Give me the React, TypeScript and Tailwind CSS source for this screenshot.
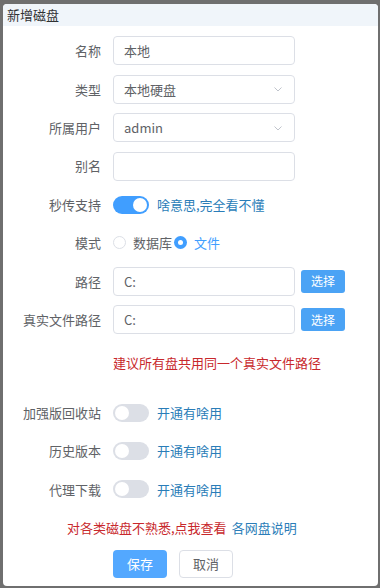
import React from 'react';

const font = { fontFamily: '"Noto Sans CJK SC", "Noto Sans", sans-serif' };

const Label: React.FC<{ text: string }> = ({ text }) => (
  <div className="w-[110px] shrink-0 pr-[12px] text-right text-[13px] text-[#606266]">{text}</div>
);

const Chevron = () => (
  <svg width="12" height="12" viewBox="0 0 12 12" className="text-[#c0c4cc]">
    <path d="M2.5 4.5 L6 8 L9.5 4.5" fill="none" stroke="currentColor" strokeWidth="1" />
  </svg>
);

const Input: React.FC<{ value?: string; select?: boolean }> = ({ value, select }) => (
  <div className="flex h-[29px] w-[182px] items-center justify-between rounded-[4px] border border-[#dcdfe6] bg-white pl-[10px] pr-[10px] text-[13px] text-[#606266]">
    <span>{value}</span>
    {select && <Chevron />}
  </div>
);

const Toggle: React.FC<{ on?: boolean }> = ({ on }) => (
  <div
    className={
      on
        ? 'flex h-[18px] w-[36px] items-center justify-end rounded-full bg-[#409eff] px-[2px]'
        : 'flex h-[18px] w-[36px] items-center justify-start rounded-full bg-[#dcdfe6] px-[2px]'
    }
  >
    <div className="h-[14px] w-[14px] rounded-full bg-white" />
  </div>
);

const Row: React.FC<{ label?: string; children?: React.ReactNode; className?: string }> = ({
  label,
  children,
  className,
}) => (
  <div className={'flex h-[38.4px] items-center ' + (className ?? '')}>
    <Label text={label ?? ''} />
    {children}
  </div>
);

const PickButton = () => (
  <div className="ml-[6px] flex h-[23px] w-[44px] items-center justify-center rounded-[3px] bg-[#4ba3f5] text-[12px] text-white">
    选择
  </div>
);

export default function App() {
  return (
    <div className="h-[588px] w-[380px] overflow-hidden bg-[#6f6f6f] pt-[4px] pl-[3px] pr-[2px]" style={font}>
      <div className="h-[582px] overflow-hidden rounded-[4px] bg-white">
        <div className="flex h-[22px] items-center bg-[#f0f5fa] pl-[4px] text-[13px] text-[#303133]">新增磁盘</div>
        <div className="pt-[5.8px]">
          <Row label="名称">
            <Input value="本地" />
          </Row>
          <Row label="类型">
            <Input value="本地硬盘" select />
          </Row>
          <Row label="所属用户">
            <Input value="admin" select />
          </Row>
          <Row label="别名">
            <Input />
          </Row>
          <Row label="秒传支持">
            <Toggle on />
            <span className="ml-[8px] text-[13px] text-[#2a7db8]">啥意思,完全看不懂</span>
          </Row>
          <Row label="模式">
            <div className="flex items-center text-[13px]">
              <div className="h-[13px] w-[13px] rounded-full border border-[#dcdfe6] bg-white" />
              <span className="ml-[7px] text-[#606266]">数据库</span>
              <div className="ml-[2px] flex h-[13px] w-[13px] items-center justify-center rounded-full bg-[#409eff]">
                <div className="h-[5px] w-[5px] rounded-full bg-white" />
              </div>
              <span className="ml-[7px] text-[#409eff]">文件</span>
            </div>
          </Row>
          <Row label="路径">
            <Input value="C:" />
            <PickButton />
          </Row>
          <Row label="真实文件路径">
            <Input value="C:" />
            <PickButton />
          </Row>
          <Row className="mt-[4.6px]">
            <span className="text-[13px] text-[#c8282c]">建议所有盘共用同一个真实文件路径</span>
          </Row>
          <Row label="加强版回收站" className="mt-[11.6px]">
            <Toggle />
            <span className="ml-[8px] text-[13px] text-[#2a7db8]">开通有啥用</span>
          </Row>
          <Row label="历史版本">
            <Toggle />
            <span className="ml-[8px] text-[13px] text-[#2a7db8]">开通有啥用</span>
          </Row>
          <Row label="代理下载">
            <Toggle />
            <span className="ml-[8px] text-[13px] text-[#2a7db8]">开通有啥用</span>
          </Row>
          <div className="flex h-[38.4px] items-center pl-[64px] text-[13px]">
            <span className="text-[#c8282c]">对各类磁盘不熟悉,点我查看</span>
            <span className="ml-[5px] text-[#2a7db8]">各网盘说明</span>
          </div>
          <div className="flex h-[34px] items-center pl-[110px]">
            <div className="flex h-[28px] w-[54px] items-center justify-center rounded-[4px] bg-[#53a8ff] text-[13px] text-white">
              保存
            </div>
            <div className="ml-[12px] flex h-[28px] w-[54px] items-center justify-center rounded-[4px] border border-[#dcdfe6] bg-white text-[13px] text-[#606266]">
              取消
            </div>
          </div>
        </div>
      </div>
    </div>
  );
}
